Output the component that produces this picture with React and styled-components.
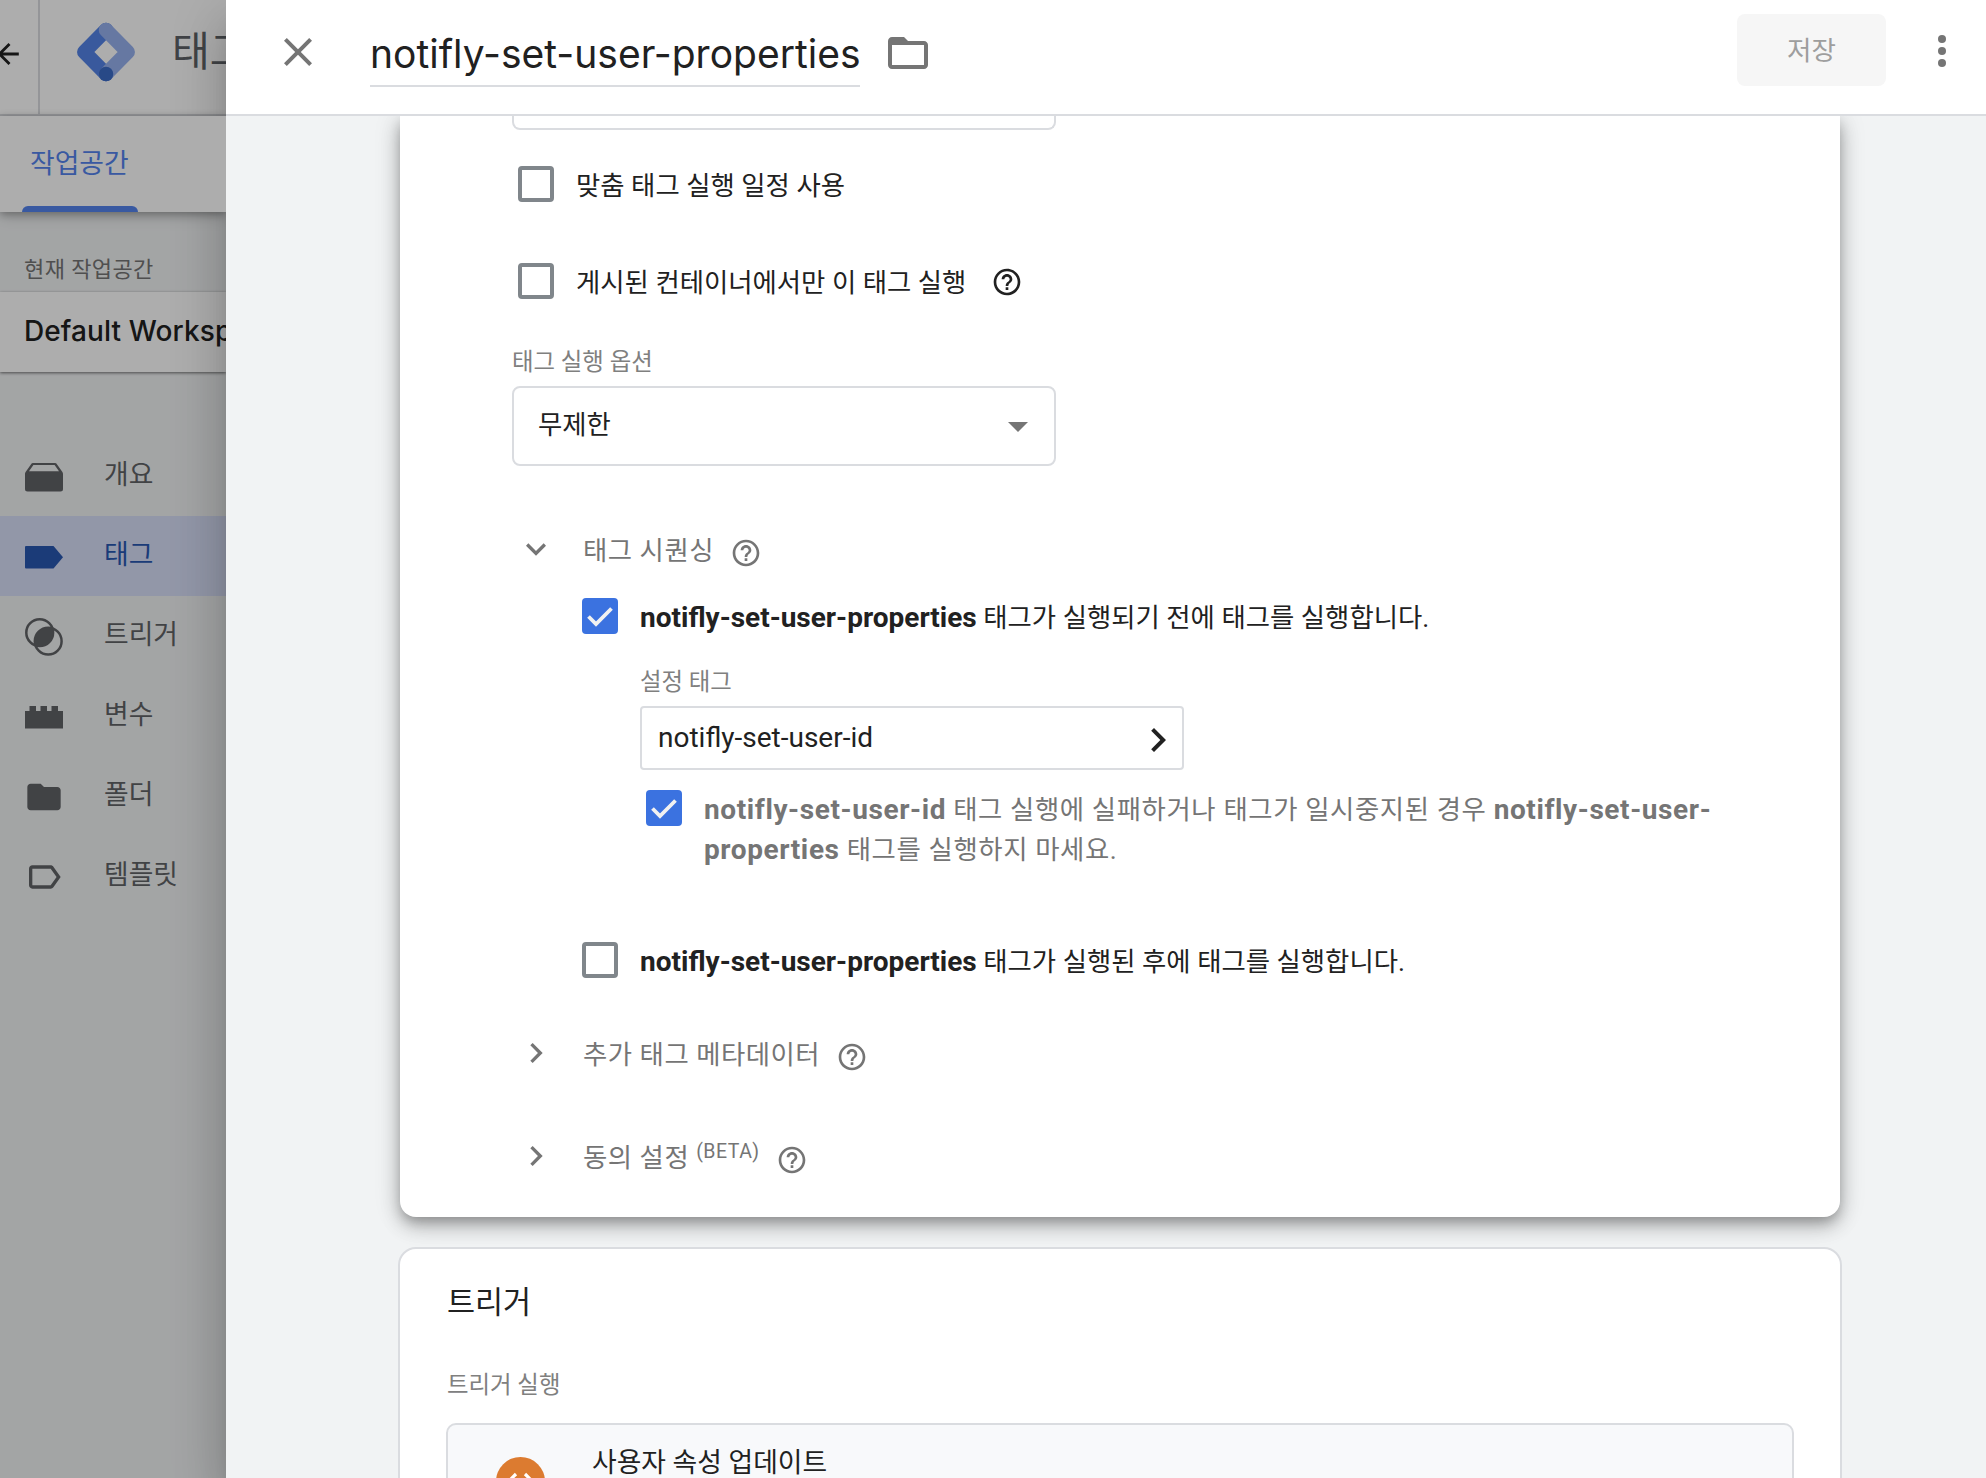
import React from "react";
import styled, { createGlobalStyle, css } from "styled-components";

const GlobalStyle = createGlobalStyle`
  *, *::before, *::after { box-sizing: border-box; }
  html, body { margin: 0; height: 1478px; overflow: hidden; }
  body {
    font-family: Roboto, "Noto Sans CJK KR", sans-serif;
    font-size: 26.4px;
    line-height: 40px;
    color: #212121;
    background: #f1f3f4;
  }
`;

/* ---------- shell ---------- */

const Screen = styled.div`
  position: relative;
  display: flex;
  width: 1986px;
  height: 1478px;
  overflow: hidden;
`;

const Workspace = styled.div`
  position: relative;
  flex: none;
  width: 226px;
  height: 1478px;
  overflow: hidden;
  display: flex;
  flex-direction: column;
  background: #f1f3f4;
`;

const Scrim = styled.div`
  position: absolute;
  inset: 0;
  z-index: 2;
  background: rgba(0, 0, 0, 0.32);
`;

const TopBar = styled.div`
  flex: none;
  display: flex;
  height: 116px;
  background: #fff;
  border-bottom: 2px solid #dadce0;
`;

const BackCell = styled.div`
  flex: none;
  width: 40px;
  border-right: 2px solid #dadce0;
  svg { display: block; margin-top: 38px; }
`;

const Brand = styled.div`
  display: flex;
  align-items: flex-start;
  padding: 20px 0 0 34px;
  white-space: nowrap;
  svg { flex: none; }
`;

const BrandName = styled.span`
  margin-left: 34px;
  margin-top: 2px;
  font-size: 41px;
  line-height: 60px;
  color: #5f6368;
`;

const Tabs = styled.div`
  position: relative;
  z-index: 1;
  flex: none;
  display: flex;
  height: 96px;
  padding-left: 22px;
  background: #fff;
  box-shadow: 0 2px 8px rgba(0, 0, 0, 0.3), 0 6px 14px rgba(0, 0, 0, 0.12);
`;

const Tab = styled.div`
  display: flex;
  flex-direction: column;
  justify-content: space-between;
  width: 116px;
  padding-left: 8px;
  padding-top: 28px;
  white-space: nowrap;
  color: #5484ee;
  font-size: 26.8px;
  &::after {
    content: "";
    height: 6px;
    margin-left: -8px;
    border-radius: 6px 6px 0 0;
    background: #5484ee;
  }
`;

const SideLabel = styled.div`
  flex: none;
  height: 80px;
  padding: 38px 0 0 24px;
  font-size: 22px;
  line-height: 40px;
  letter-spacing: 0.4px;
  color: #757575;
  white-space: nowrap;
`;

const WorkspaceName = styled.div`
  flex: none;
  height: 80px;
  padding-left: 24px;
  background: #fff;
  box-shadow: 0 1px 3px rgba(0, 0, 0, 0.55);
  font: 500 28px/79px Inter, sans-serif;
  letter-spacing: 0.1px;
  white-space: nowrap;
`;

const Nav = styled.nav`
  flex: none;
  margin-top: 64px;
`;

const NavItem = styled.div`
  display: flex;
  align-items: center;
  height: 80px;
  padding-left: 24px;
  white-space: nowrap;
  color: ${(p) => (p.$active ? "#2857b2" : "#616366")};
  background: ${(p) => (p.$active ? "#d8dff8" : "transparent")};
  svg { flex: none; width: 40px; height: 40px; fill: currentColor; margin-top: 1px; }
  span { margin-left: 40px; margin-top: -2px; font-size: 26.8px; }
`;

/* ---------- panel ---------- */

const Panel = styled.div`
  position: relative;
  flex: 1;
  display: flex;
  flex-direction: column;
  height: 1478px;
  min-width: 0;
  background: #f1f3f4;
  box-shadow: 0 16px 20px -10px rgba(0, 0, 0, 0.16), 0 32px 48px 4px rgba(0, 0, 0, 0.14),
    0 12px 56px 4px rgba(0, 0, 0, 0.1);
`;

const PanelHeader = styled.header`
  position: relative;
  z-index: 2;
  flex: none;
  display: flex;
  align-items: flex-start;
  height: 116px;
  padding-left: 50px;
  background: #fff;
  border-bottom: 2px solid #dadce0;
  > svg { flex: none; fill: #757575; }
`;

const CloseIcon = styled.svg`margin: 28px 48px 0 -2px;`;
const FolderIcon = styled.svg`margin: 29px auto 0 24px;`;
const MoreIcon = styled.svg`margin: 27px 20px 0 32px;`;

const Title = styled.div`
  flex: none;
  width: 490px;
  height: 87px;
  border-bottom: 2px solid #dadce0;
  font-family: Inter, sans-serif;
  font-size: 39px;
  line-height: 107px;
  white-space: nowrap;
`;

const SaveButton = styled.button`
  width: 149px;
  height: 72px;
  margin-top: 14px;
  padding: 2px 0 0;
  border: 0;
  border-radius: 8px;
  background: #f6f6f6;
  color: #9e9e9e;
  font: 26.6px/40px Roboto, "Noto Sans CJK KR", sans-serif;
`;

const Body = styled.div`
  flex: 1;
  min-height: 0;
  overflow: hidden;
  padding: 0 144px 0 172px;
`;

const ConfigCard = styled.section`
  height: 1101px;
  margin: 0 2px 30px;
  padding: 0 100px 0 112px;
  background: #fff;
  border-radius: 0 0 16px 16px;
  box-shadow: 0 6px 12px -2px rgba(0, 0, 0, 0.22), 0 10px 20px rgba(0, 0, 0, 0.2),
    0 2px 28px rgba(0, 0, 0, 0.14);
`;

const FieldEnd = styled.div`
  width: 544px;
  height: 14px;
  border: 2px solid #dadce0;
  border-top: 0;
  border-radius: 0 0 8px 8px;
`;

const CheckRow = styled.div`
  display: flex;
  align-items: flex-start;
  margin-top: ${(p) => p.$mt}px;
  margin-left: ${(p) => p.$ml}px;
  min-height: 36px;
  color: ${(p) => (p.$muted ? "#757575" : "#212121")};
  letter-spacing: ${(p) => (p.$muted ? "0.6px" : "normal")};
`;

const Box = styled.span`
  flex: none;
  display: block;
  width: 36px;
  height: 36px;
  margin-right: 22px;
  border-radius: 4px;
  ${(p) =>
    p.$on
      ? css`background: #3b72e0;`
      : css`border: 4px solid #80868b;`}
  svg { display: block; }
`;

const CheckText = styled.div`
  height: 36px;
  line-height: 40px;
  white-space: nowrap;
`;

const Strong = styled.strong`
  font-size: 28px;
  font-weight: 700;
`;

const Help = styled.svg`
  flex: none;
  width: 32px;
  height: 32px;
  fill: ${(p) => p.$color || "#757575"};
  margin-left: ${(p) => p.$gap}px;
  margin-top: 3px;
`;

const Label = styled.div`
  height: 30px;
  margin-top: ${(p) => p.$mt}px;
  margin-left: ${(p) => p.$ml || 0}px;
  font-size: 23.4px;
  line-height: 32px;
  color: #80807f;
  white-space: nowrap;
`;

const Select = styled.div`
  display: flex;
  justify-content: space-between;
  align-items: center;
  width: 544px;
  height: 80px;
  margin-top: 10px;
  padding: 0 12px 0 24px;
  border: 2px solid #dadce0;
  border-radius: 8px;
  span { margin-top: -2px; }
  svg { fill: #757575; }
`;

const TagField = styled.div`
  display: flex;
  justify-content: space-between;
  align-items: center;
  width: 544px;
  height: 64px;
  margin: 10px 0 0 128px;
  padding: 0 0 0 16px;
  border: 2px solid #dadce0;
  border-radius: 4px;
  font-size: 28px;
  svg { fill: #212121; margin-top: 4px; }
`;

const SectionRow = styled.div`
  display: flex;
  align-items: center;
  height: 40px;
  margin-top: ${(p) => p.$mt}px;
  padding-left: 4px;
  color: #757575;
  letter-spacing: 0.5px;
  white-space: nowrap;
  > svg:first-child { fill: #757575; width: 40px; height: 40px; margin-right: 27px; }
  > svg:last-child { margin-top: 7px; }
`;

const SectionText = styled.span`
  margin-top: 4px;
  line-height: 40px;
`;

const Beta = styled.span`
  margin: -8px 0 0 7px;
  font-size: 19.5px;
  line-height: 24px;
  letter-spacing: 0.5px;
`;

const TriggerCard = styled.section`
  position: relative;
  height: 400px;
  padding: 34px 46px 0;
  background: #fff;
  border: 2px solid #dadce0;
  border-radius: 18px;
`;

const CardTitle = styled.h2`
  margin: 0 0 0 1px;
  font-size: 30.5px;
  line-height: 40px;
  font-weight: 400;
`;

const TriggerItem = styled.div`
  display: flex;
  align-items: flex-start;
  height: 200px;
  margin-top: 24px;
  padding: 18px 0 0 48px;
  background: #f8f9fb;
  border: 2px solid #dadce0;
  border-radius: 10px;
  font-size: 26.8px;
  > svg { margin-top: 14px; margin-right: 47px; }
`;

/* ---------- icons ---------- */

const HELP_PATH =
  "M11 18h2v-2h-2v2zm1-16C6.48 2 2 6.48 2 12s4.48 10 10 10 10-4.48 10-10S17.52 2 12 2zm0 18c-4.41 0-8-3.59-8-8s3.59-8 8-8 8 3.59 8 8-3.59 8-8 8zm0-14c-2.21 0-4 1.79-4 4h2c0-1.1.9-2 2-2s2 .9 2 2c0 2-3 1.75-3 5h2c0-2.25 3-2.5 3-5 0-2.21-1.79-4-4-4z";

const HelpIcon = ({ gap, color }) => (
  <Help viewBox="0 0 24 24" $gap={gap} $color={color}>
    <path d={HELP_PATH} />
  </Help>
);

const ChevronRight = ({ size }) => (
  <svg viewBox="0 0 24 24" width={size} height={size}>
    <path d="M10 6 8.59 7.41 13.17 12l-4.58 4.59L10 18l6-6z" />
  </svg>
);

const ChevronDown = () => (
  <svg viewBox="0 0 24 24">
    <path d="M16.59 8.59 12 13.17 7.41 8.59 6 10l6 6 6-6z" />
  </svg>
);

const Checkbox = ({ on }) => (
  <Box $on={on}>
    {on && (
      <svg width="36" height="36" viewBox="0 0 36 36">
        <path d="M6.500 18.500 14 26 29.500 10.500" fill="none" stroke="#f1f1f1" strokeWidth="3.800" />
      </svg>
    )}
  </Box>
);

const Logo = () => (
  <svg width="64" height="64" viewBox="0 0 64 64" fill="none" strokeWidth="14.500" strokeLinecap="round" strokeLinejoin="round">
    <path d="M32 10 10.300 32 32 54" stroke="#5484e8" />
    <path d="M32 10 53.700 32 32 54" stroke="#97b2ef" />
    <circle cx="32" cy="54" r="7.250" fill="#3c6cc8" />
  </svg>
);

const navItems = [
  {
    label: "개요",
    icon: (
      <svg viewBox="0 0 40 40">
        <path d="M8.800 6h22.400a1.500 1.500 0 0 1 1.200.6l6 8.400c.4.600.6 1.200.6 2V32a2.500 2.500 0 0 1-2.500 2.500h-33A2.500 2.500 0 0 1 1 32V17c0-.8.2-1.400.6-2l6-8.400A1.500 1.500 0 0 1 8.800 6zM9.400 8 5 14.200h30L30.600 8z" fillRule="evenodd" />
      </svg>
    ),
  },
  {
    label: "태그",
    active: true,
    icon: (
      <svg viewBox="0 0 40 40">
        <path d="M2 9h27.500L39 20.300 29.500 31.500H2a1 1 0 0 1-1-1V10a1 1 0 0 1 1-1z" />
      </svg>
    ),
  },
  {
    label: "트리거",
    icon: (
      <svg viewBox="0 0 40 40">
        <circle cx="15.700" cy="15.700" r="13.400" fill="none" stroke="currentColor" strokeWidth="2.500" />
        <circle cx="24.200" cy="24.200" r="13.400" fill="none" stroke="currentColor" strokeWidth="2.500" />
        <path d="M28.420 11.480A13.400 13.400 0 0 1 11.480 28.420 13.400 13.400 0 0 1 28.420 11.480z" />
      </svg>
    ),
  },
  {
    label: "변수",
    icon: (
      <svg viewBox="0 0 40 40">
        <path d="M1 14h4.500V9h6.500v5h4.500V9H23v5h4.500V9H34v5h5v17.500H1z" />
      </svg>
    ),
  },
  {
    label: "폴더",
    icon: (
      <svg viewBox="0 0 24 24">
        <path d="M10 4H4c-1.100 0-1.990.9-1.990 2L2 18c0 1.100.9 2 2 2h16c1.100 0 2-.9 2-2V8c0-1.100-.9-2-2-2h-8l-2-2z" />
      </svg>
    ),
  },
  {
    label: "템플릿",
    icon: (
      <svg viewBox="0 0 24 24">
        <path d="M17.630 5.840C17.270 5.330 16.670 5 16 5L5 5.010C3.900 5.010 3 5.900 3 7v10c0 1.100.9 1.990 2 1.990L16 19c.67 0 1.270-.33 1.630-.84L22 12l-4.370-6.160zM16 17H5V7h11l3.550 5L16 17z" />
      </svg>
    ),
  },
];

export default function App() {
  return (
    <Screen>
      <GlobalStyle />
      <Workspace>
        <TopBar>
          <BackCell>
            <svg width="38" height="32" viewBox="0 0 38 32" fill="none" stroke="#212121" strokeWidth="2.800">
              <path d="M18.800 16H.5M9.500 6-.5 16l10 10" />
            </svg>
          </BackCell>
          <Brand>
            <Logo />
            <BrandName>태그 관리자</BrandName>
          </Brand>
        </TopBar>
        <Tabs>
          <Tab>작업공간</Tab>
        </Tabs>
        <SideLabel>현재 작업공간</SideLabel>
        <WorkspaceName>Default Workspace</WorkspaceName>
        <Nav>
          {navItems.map((n) => (
            <NavItem key={n.label} $active={n.active}>
              {n.icon}
              <span>{n.label}</span>
            </NavItem>
          ))}
        </Nav>
        <Scrim />
      </Workspace>

      <Panel>
        <PanelHeader>
          <CloseIcon width="48" height="48" viewBox="0 0 24 24">
            <path d="M19 6.410 17.590 5 12 10.590 6.410 5 5 6.410 10.590 12 5 17.590 6.410 19 12 13.410 17.590 19 19 17.590 13.410 12z" />
          </CloseIcon>
          <Title>notifly-set-user-properties</Title>
          <FolderIcon width="48" height="48" viewBox="0 0 24 24">
            <path d="M20 6h-8l-2-2H4c-1.100 0-1.990.9-1.990 2L2 18c0 1.100.9 2 2 2h16c1.100 0 2-.9 2-2V8c0-1.100-.9-2-2-2zm0 12H4V8h16v10z" />
          </FolderIcon>
          <SaveButton>저장</SaveButton>
          <MoreIcon width="48" height="48" viewBox="0 0 24 24">
            <circle cx="12" cy="6" r="2" />
            <circle cx="12" cy="12" r="2" />
            <circle cx="12" cy="18" r="2" />
          </MoreIcon>
        </PanelHeader>

        <Body>
          <ConfigCard>
            <FieldEnd />
            <CheckRow $mt={36} $ml={6}>
              <Checkbox />
              <CheckText>맞춤 태그 실행 일정 사용</CheckText>
            </CheckRow>
            <CheckRow $mt={61} $ml={6}>
              <Checkbox />
              <CheckText>게시된 컨테이너에서만 이 태그 실행</CheckText>
              <HelpIcon gap={25} color="#212121" />
            </CheckRow>
            <Label $mt={47}>태그 실행 옵션</Label>
            <Select>
              <span>무제한</span>
              <svg width="48" height="48" viewBox="0 0 24 24">
                <path d="M7 10l5 5 5-5z" />
              </svg>
            </Select>

            <SectionRow $mt={63}>
              <ChevronDown />
              <SectionText>태그 시퀀싱</SectionText>
              <HelpIcon gap={16} />
            </SectionRow>
            <CheckRow $mt={29} $ml={70}>
              <Checkbox on />
              <CheckText>
                <Strong>notifly-set-user-properties</Strong> 태그가 실행되기 전에 태그를 실행합니다.
              </CheckText>
            </CheckRow>
            <Label $mt={32} $ml={128}>설정 태그</Label>
            <TagField>
              <span>notifly-set-user-id</span>
              <ChevronRight size={48} />
            </TagField>
            <CheckRow $mt={20} $ml={134} $muted>
              <Checkbox on />
              <CheckText>
                <Strong>notifly-set-user-id</Strong> 태그 실행에 실패하거나 태그가 일시중지된 경우{" "}
                <Strong>notifly-set-user-</Strong>
                <br />
                <Strong>properties</Strong> 태그를 실행하지 마세요.
              </CheckText>
            </CheckRow>
            <CheckRow $mt={116} $ml={70}>
              <Checkbox />
              <CheckText>
                <Strong>notifly-set-user-properties</Strong> 태그가 실행된 후에 태그를 실행합니다.
              </CheckText>
            </CheckRow>
            <SectionRow $mt={55}>
              <ChevronRight size={40} />
              <SectionText>추가 태그 메타데이터</SectionText>
              <HelpIcon gap={16} />
            </SectionRow>
            <SectionRow $mt={63}>
              <ChevronRight size={40} />
              <SectionText>동의 설정</SectionText>
              <Beta>(BETA)</Beta>
              <HelpIcon gap={16} />
            </SectionRow>
          </ConfigCard>

          <TriggerCard>
            <CardTitle>트리거</CardTitle>
            <Label $mt={46} $ml={1}>트리거 실행</Label>
            <TriggerItem>
              <svg width="49" height="49" viewBox="0 0 49 49">
                <circle cx="24.500" cy="24.500" r="24.500" fill="#dc7b30" />
                <path d="M20 17l-8 8 8 8M29 17l8 8-8 8" fill="none" stroke="#fff" strokeWidth="3.200" />
              </svg>
              <span>사용자 속성 업데이트</span>
            </TriggerItem>
          </TriggerCard>
        </Body>
      </Panel>
    </Screen>
  );
}
